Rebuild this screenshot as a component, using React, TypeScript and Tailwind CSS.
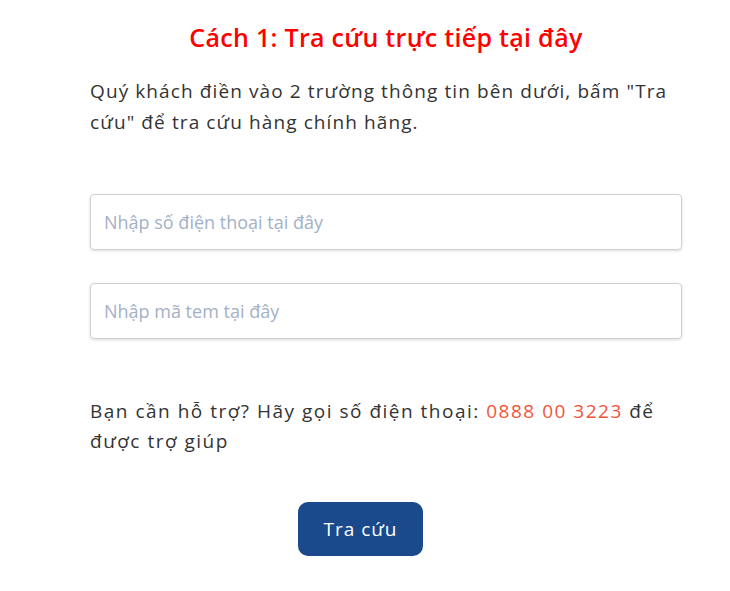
export default function App() {
  return (
    <div className="w-[730px] h-[591px] bg-white font-['Open_Sans',sans-serif]">
      <div className="ml-[90px] w-[592px] pt-[19px]">
        <h2 className="text-center text-[25px] leading-[36px] font-semibold tracking-[0.3px] text-[#ff0000]">
          Cách 1: Tra cứu trực tiếp tại đây
        </h2>
        <p className="mt-[21px] text-[19px] leading-[31px] tracking-[1.1px] text-[#333333] whitespace-nowrap">
          Quý khách điền vào 2 trường thông tin bên dưới, bấm "Tra
          <br />
          cứu" để tra cứu hàng chính hãng.
        </p>

        <div className="mt-[56px] flex flex-col gap-[33px]">
          <input
            className="h-[56px] w-full rounded-[4px] border border-[#d0d0d0] px-[13px] text-[18px] shadow-[0_1px_3px_rgba(0,0,0,0.15)] placeholder:text-[#a3b1c6] outline-none"
            placeholder="Nhập số điện thoại tại đây"
          />
          <input
            className="h-[56px] w-full rounded-[4px] border border-[#d0d0d0] px-[13px] text-[18px] shadow-[0_1px_3px_rgba(0,0,0,0.15)] placeholder:text-[#a3b1c6] outline-none"
            placeholder="Nhập mã tem tại đây"
          />
        </div>

        <p className="mt-[57px] text-[19px] leading-[30px] tracking-[1.5px] text-[#333333] whitespace-nowrap">
          Bạn cần hỗ trợ? Hãy gọi số điện thoại: <span className="text-[#f4533b]">0888 00 3223</span> để
          <br />
          được trợ giúp
        </p>

        <button className="mt-[46px] ml-[208px] h-[54px] w-[125px] rounded-[10px] bg-[#1a4a8b] text-[19px] tracking-[1px] text-white">
          Tra cứu
        </button>
      </div>
    </div>
  );
}
